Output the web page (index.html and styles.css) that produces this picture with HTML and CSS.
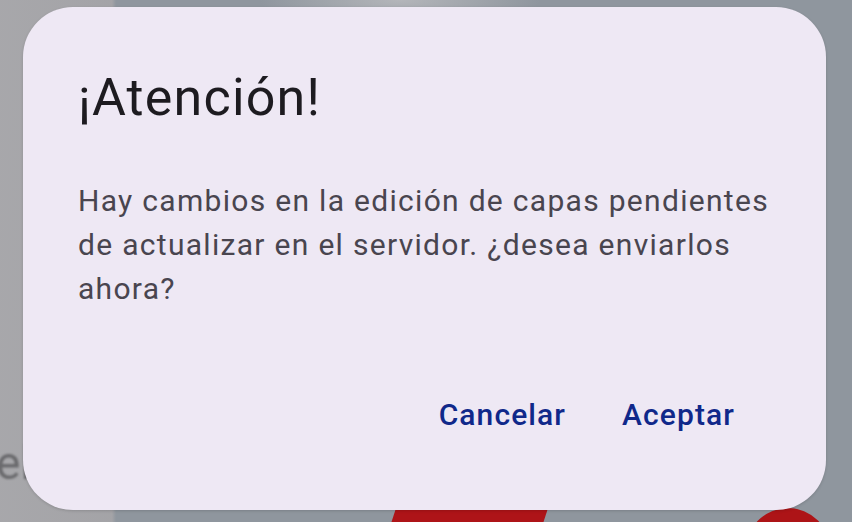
FILE: index.html
```html
<!DOCTYPE html>
<html lang="es">
<head>
    <meta charset="UTF-8">
    <meta name="viewport" content="width=device-width, initial-scale=1.0">
    <title>¡Atención!</title>
    <link rel="stylesheet" href="styles.css">
</head>
<body>
    <div class="backdrop">
        <span class="behind-text">el</span>
        <div class="red-tab"></div>
        <div class="red-dot"></div>

        <div class="dialog">
            <h1 class="dialog-title">¡Atención!</h1>
            <p class="dialog-text">Hay cambios en la edición de capas pendientes de actualizar en el servidor. ¿desea enviarlos ahora?</p>
            <div class="dialog-actions">
                <button class="text-btn">Cancelar</button>
                <button class="text-btn">Aceptar</button>
            </div>
        </div>
    </div>
</body>
</html>
```

FILE: styles.css
```css
html, body {
    margin: 0;
    height: 100%;
}
body {
    font-family: Roboto, "Noto Sans", Arial, sans-serif;
    overflow: hidden;
}
.backdrop {
    position: relative;
    height: 100%;
    box-sizing: border-box;
    padding: 7px 26px 12px 23px;
    display: flex;
    overflow: hidden;
    background:
        linear-gradient(90deg, rgba(170, 169, 172, 0.9) 0, rgba(166, 165, 168, 0.9) 112px, transparent 116px),
        radial-gradient(ellipse 140px 30px at 400px 0, #b4b6ba, transparent),
        #8f969e;
}
/* blurred word of the map behind the dialog */
.behind-text {
    position: absolute;
    left: -4px;
    top: 436px;
    font-size: 46px;
    color: #6a6a6d;
    filter: blur(1px);
}
.red-tab {
    position: absolute;
    left: 385px;
    bottom: -20px;
    width: 152px;
    height: 40px;
    background: #ae1418;
    transform: skewX(-18deg);
    transform-origin: bottom left;
}
.red-dot {
    position: absolute;
    left: 746px;
    top: 508px;
    width: 84px;
    height: 84px;
    border-radius: 50%;
    background: #ad1417;
}
.dialog {
    position: relative;
    flex: 1;
    background: #eee8f4;
    border-radius: 50px;
    padding: 0 30px 0 55px;
    display: flex;
    flex-direction: column;
    box-shadow: 0 1px 3px rgba(0, 0, 0, 0.15);
}
.dialog-title {
    margin: 59px 0 0;
    font-size: 52px;
    font-weight: 400;
    letter-spacing: 1.2px;
    line-height: 64px;
    color: #1d1b20;
}
.dialog-text {
    margin: 49px 0 0;
    font-size: 30px;
    line-height: 44px;
    letter-spacing: 1.3px;
    color: #49454f;
}
.dialog-actions {
    margin-top: auto;
    margin-bottom: 78px;
    display: flex;
    justify-content: flex-end;
    gap: 56px;
    padding-right: 61px;
}
.text-btn {
    background: none;
    border: none;
    padding: 0;
    font-family: inherit;
    font-size: 30px;
    font-weight: 500;
    color: #10288a;
    letter-spacing: 1.1px;
}
```
